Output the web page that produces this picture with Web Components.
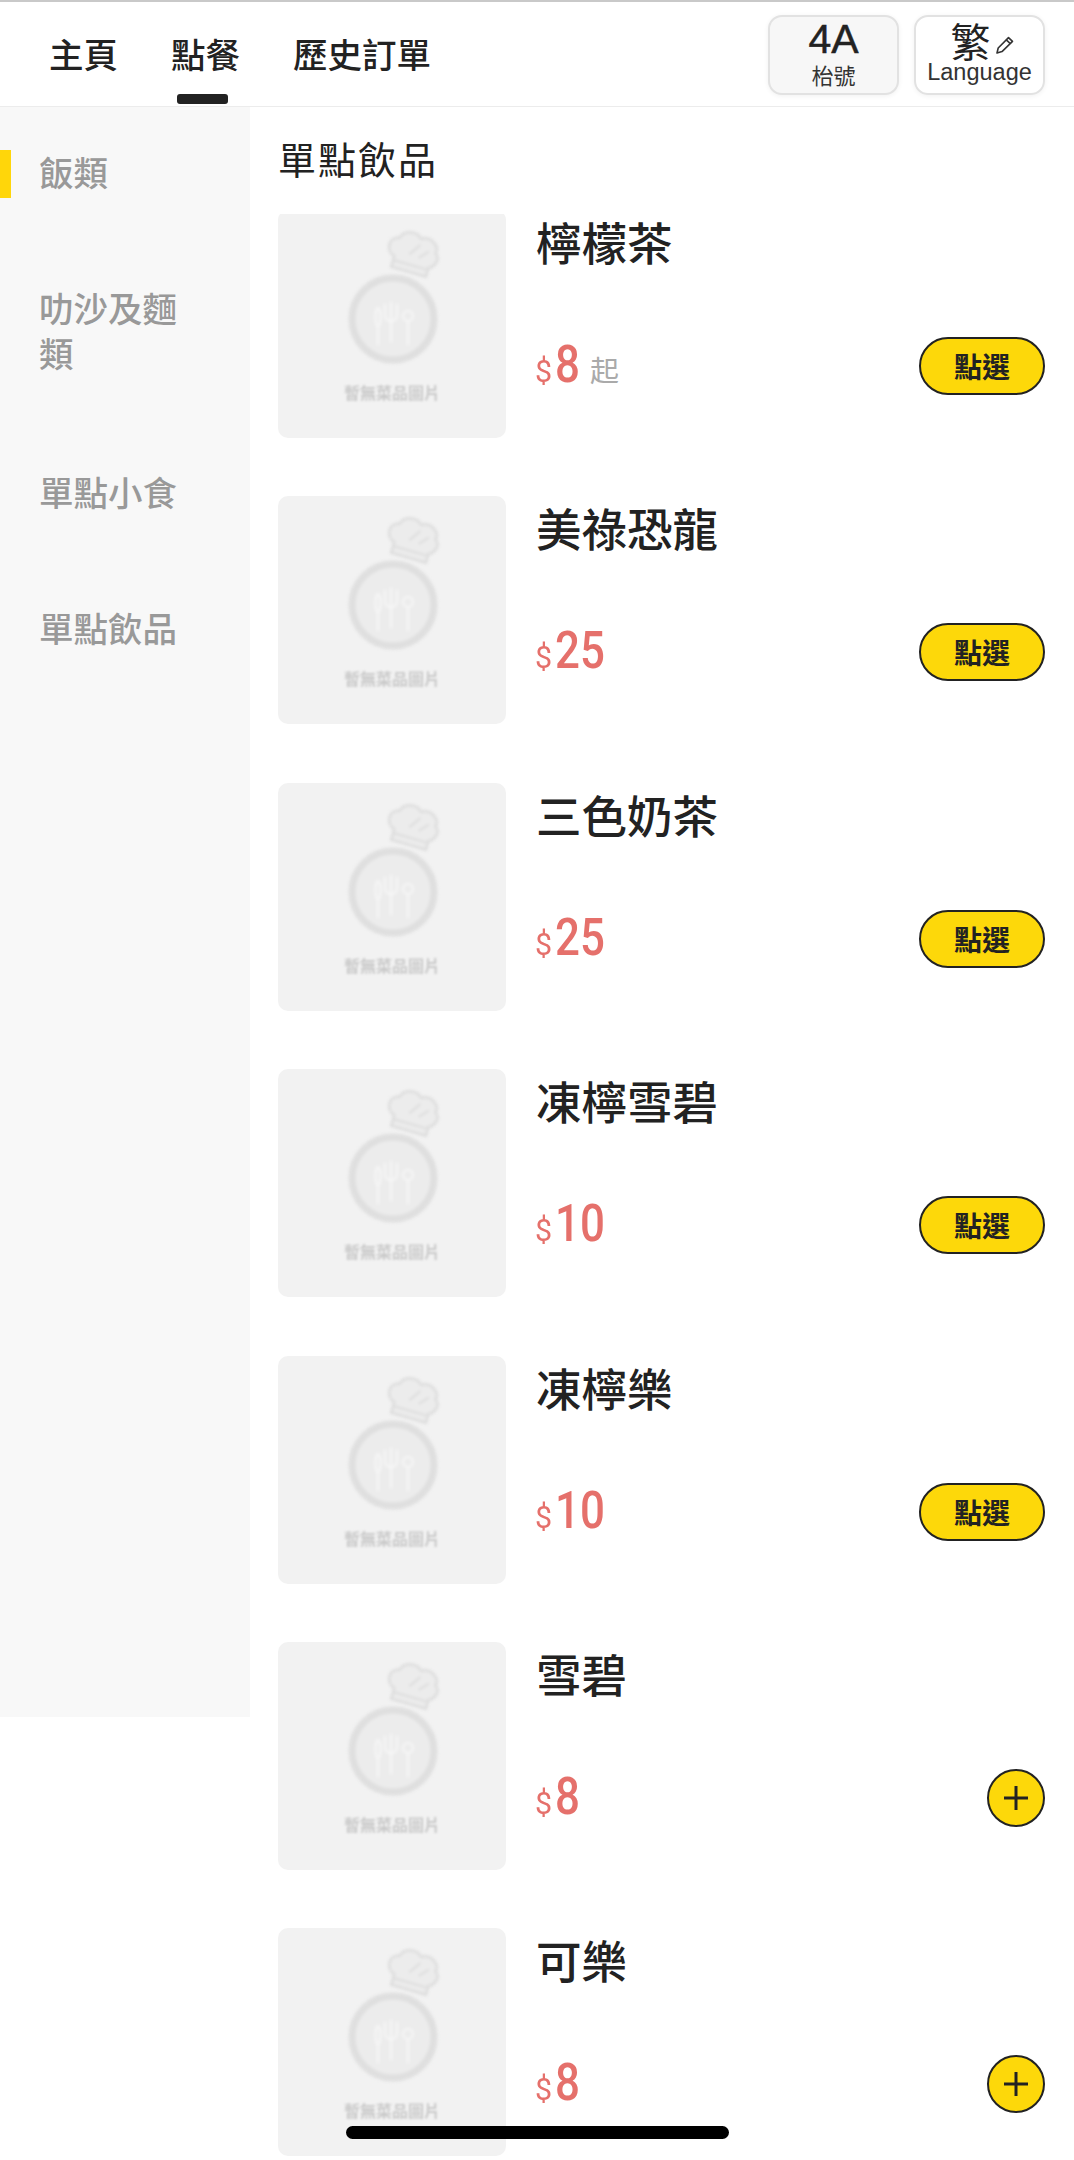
<!DOCTYPE html>
<html lang="zh-Hant">
<head>
<meta charset="utf-8">
<title>點餐</title>
<style>
  html, body { margin: 0; height: 2160px; overflow: hidden; background: #fff; }
  body { font-family: "Noto Sans CJK TC", "Liberation Sans", sans-serif; color: #222; }
</style>
</head>
<body>
<top-bar></top-bar>
<div style="display:flex; align-items:flex-start">
  <side-menu></side-menu>
  <food-list title="單點飲品">
    <menu-card name="檸檬茶" price="8" suffix="起" mode="pill"></menu-card>
    <menu-card name="美祿恐龍" price="25" mode="pill"></menu-card>
    <menu-card name="三色奶茶" price="25" mode="pill"></menu-card>
    <menu-card name="凍檸雪碧" price="10" mode="pill"></menu-card>
    <menu-card name="凍檸樂" price="10" mode="pill"></menu-card>
    <menu-card name="雪碧" price="8" mode="plus"></menu-card>
    <menu-card name="可樂" price="8" mode="plus"></menu-card>
  </food-list>
</div>
<home-bar></home-bar>

<script>
// Top bar: tabs on the left, table number and language on the right
class TopBar extends HTMLElement {
  constructor() {
    super();
    const root = this.attachShadow({mode: 'open'});
    root.innerHTML = `
      <style>
        :host { display: flex; box-sizing: border-box; height: 107px; padding: 0 29px 0 49px;
                justify-content: space-between; align-items: flex-start;
                border-top: 2px solid #c9c9c9; border-bottom: 1px solid #ececec; }
        nav { display: flex; gap: 53px; font-size: 34.5px; font-weight: 500; line-height: 50px; padding-top: 26px; }
        a { position: relative; display: block; }
        a.on::after { content: ""; position: absolute; left: 6px; right: 12px; top: 66px; height: 10px;
                      border-radius: 3px; background: #222; }
        .btns { display: flex; gap: 15px; padding-top: 13px; }
        .btn { box-sizing: border-box; width: 131px; height: 80px; border: 2px solid #e2e2e2; border-radius: 14px;
               display: flex; flex-direction: column; align-items: center; box-shadow: 0 1px 5px rgba(0,0,0,.06); }
        .gray { background: #f7f7f7; }
        .big { font-size: 41px; line-height: 44px; height: 44px; display: flex; align-items: center; gap: 4px; }
        .fan { height: 38px; line-height: 38px; margin-top: 4px; font-size: 40px; margin-left: 6px; }
        .sm { font-size: 22px; line-height: 26px; color: #333; }
        .en { font-family: "Liberation Sans", sans-serif; }
        .four { -webkit-text-stroke: .5px #222; }
        .lang { font-size: 23.5px; }
        svg { margin-top: 10px; }
      </style>
      <nav><a>主頁</a><a class="on">點餐</a><a>歷史訂單</a></nav>
      <div class="btns">
        <div class="btn gray"><span class="big en four">4A</span><span class="sm">枱號</span></div>
        <div class="btn"><span class="big fan">繁<svg width="20" height="20" viewBox="0 0 20 20" fill="none" stroke="#333" stroke-width="1.6" stroke-linejoin="round"><path d="M2 18l1.2-5L13.5 2.6l4 3.8L7 16.6z"/><path d="M11.3 4.8l4 3.8"/></svg></span><span class="sm en lang">Language</span></div>
      </div>`;
  }
}

class SideMenu extends HTMLElement {
  constructor() {
    super();
    const items = ['飯類', '叻沙及麵類', '單點小食', '單點飲品'];
    const root = this.attachShadow({mode: 'open'});
    root.innerHTML = `
      <style>
        :host { display: block; flex: none; width: 250px; height: 1610px; background: #f8f8f8; }
        div { position: relative; box-sizing: border-box; padding: 45px 66px 46px 39px;
              font-size: 34.5px; font-weight: 500; line-height: 45px; color: #999; }
        div:nth-of-type(2) { padding-bottom: 49px; }
        .on { padding-top: 42px; }
        .on::before { content: ""; position: absolute; left: 0; top: 43px; width: 11px; height: 48px; background: #ffd60a; }
      </style>
      ${items.map((t, i) => `<div class="${i ? '' : 'on'}">${t}</div>`).join('')}`;
  }
}

// Scrolling list, the first card is cut off under the heading
class FoodList extends HTMLElement {
  constructor() {
    super();
    const root = this.attachShadow({mode: 'open'});
    root.innerHTML = `
      <style>
        :host { display: block; flex: 1; min-width: 0; height: 2053px; overflow: hidden; }
        h2 { margin: 0; height: 107px; box-sizing: border-box; padding: 26px 0 0 28px;
             font-size: 38px; font-weight: 400; line-height: 50px; letter-spacing: 2px; color: #222; }
        .scroll { height: 1946px; overflow: hidden; }
        .inner { margin-top: -4px; padding: 0 29px 0 28px; display: flex; flex-direction: column; }
      </style>
      <h2>${this.getAttribute('title')}</h2>
      <div class="scroll"><div class="inner"><slot></slot></div></div>`;
  }
}

class MenuCard extends HTMLElement {
  constructor() {
    super();
    const suffix = this.getAttribute('suffix');
    const action = this.getAttribute('mode') === 'pill'
      ? '<button class="pill">點選</button>'
      : '<button class="plus"><svg width="28" height="28" viewBox="0 0 28 28" stroke="#222" stroke-width="3"><path d="M14 2v24M2 14h24"/></svg></button>';
    const root = this.attachShadow({mode: 'open'});
    root.innerHTML = `
      <style>
        :host { display: flex; gap: 30px; height: 228px; margin-bottom: 58.4px; }
        .info { flex: 1; display: flex; flex-direction: column; justify-content: space-between; padding: 2px 0 43px; }
        .name { font-size: 45.5px; font-weight: 500; line-height: 58px; color: #222; }
        .row { display: flex; align-items: center; justify-content: space-between; height: 58px; }
        .price { display: flex; align-items: baseline; color: #e5706b; font-family: Roboto, sans-serif; margin-top: -3px; }
        .cur { font-size: 32px; transform: scaleX(.95); transform-origin: left; width: 20px; margin-left: -1px; }
        .num { display: inline-block; font-size: 51px; font-weight: 500; transform: scaleX(.86); transform-origin: left;
               margin-right: calc(-.08em * var(--len)); }
        .sfx { font: 400 29px "Noto Sans CJK TC", sans-serif; color: #aaa; margin-left: 10px; }
        button { box-sizing: border-box; border: 2.5px solid #222; background: #fdd80a; color: #222; padding: 0;
                 display: flex; align-items: center; justify-content: center; font-family: inherit; }
        .pill { width: 126px; height: 58px; border-radius: 29px; font-size: 28px; font-weight: 700; }
        .plus { width: 58px; height: 58px; border-radius: 50%; }
      </style>
      <food-placeholder></food-placeholder>
      <div class="info">
        <div class="name">${this.getAttribute('name')}</div>
        <div class="row">
          <div class="price" style="--len:${this.getAttribute('price').length}">
            <span class="cur">$</span><span class="num">${this.getAttribute('price')}</span>
            ${suffix ? `<span class="sfx">${suffix}</span>` : ''}
          </div>
          ${action}
        </div>
      </div>`;
  }
}

// "No picture yet" image, blurred in the reference
class FoodPlaceholder extends HTMLElement {
  constructor() {
    super();
    const root = this.attachShadow({mode: 'open'});
    root.innerHTML = `
      <style>
        :host { display: block; position: relative; flex: none; width: 228px; height: 228px; border-radius: 10px; background: #f2f2f2; }
        svg { display: block; filter: blur(1.4px); }
        span { position: absolute; left: 0; right: 0; top: 170px; text-align: center; font-size: 16px; line-height: 24px;
               font-weight: 700; color: #c9c9c9; filter: blur(1.2px); }
      </style>
      <svg width="228" height="228" viewBox="0 0 228 228">
        <circle cx="115" cy="109" r="41" fill="#ececec" stroke="#dfdfdf" stroke-width="7"/>
        <g fill="none" stroke="#f7f7f7" stroke-width="2">
          <ellipse cx="100" cy="107" rx="2.5" ry="9"/><path d="M100 116v19"/>
          <path d="M107 94v10q0 7 6 7t6-7V94M113 92v40"/>
          <circle cx="130" cy="106" r="5"/><path d="M130 111v24"/>
        </g>
        <g transform="rotate(16 138 43)">
          <path d="M118 52c-10-3-11-17 0-19 3-10 16-11 21-5 8-5 20 1 18 10 7 5 2 14-3 16v9h-36z" fill="#ececec" stroke="#dcdcdc" stroke-width="2.5"/>
          <path d="M118 56h36" stroke="#dcdcdc" stroke-width="2"/>
          <path d="M132 46l8-12M142 47l8-9" stroke="#dcdcdc" stroke-width="2"/>
        </g>
      </svg>
      <span>暫無菜品圖片</span>`;
  }
}

class HomeBar extends HTMLElement {
  constructor() {
    super();
    const root = this.attachShadow({mode: 'open'});
    root.innerHTML = `<style>
      :host { position: fixed; left: 346px; top: 2126px; width: 383px; height: 13px; border-radius: 7px; background: #000; }
    </style>`;
  }
}

customElements.define('top-bar', TopBar);
customElements.define('side-menu', SideMenu);
customElements.define('food-list', FoodList);
customElements.define('food-placeholder', FoodPlaceholder);
customElements.define('menu-card', MenuCard);
customElements.define('home-bar', HomeBar);
</script>
</body>
</html>
